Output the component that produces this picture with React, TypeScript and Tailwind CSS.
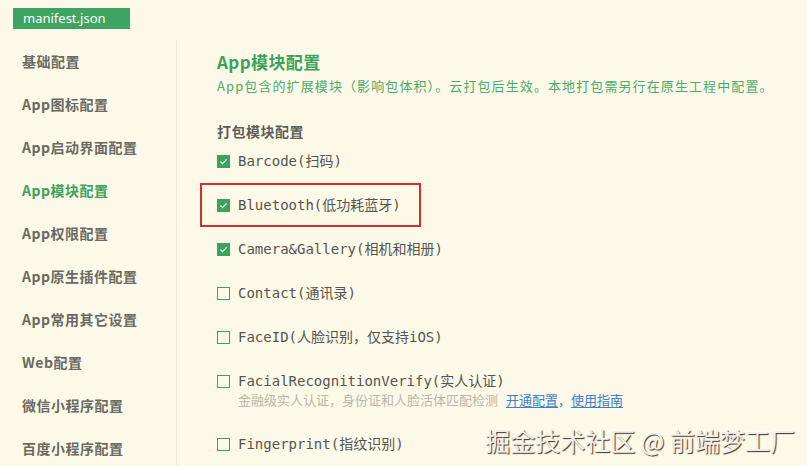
const sideItems = [
  "基础配置",
  "App图标配置",
  "App启动界面配置",
  "App模块配置",
  "App权限配置",
  "App原生插件配置",
  "App常用其它设置",
  "Web配置",
  "微信小程序配置",
  "百度小程序配置",
];

const modules = [
  { label: "Barcode(扫码)", checked: true },
  { label: "Bluetooth(低功耗蓝牙)", checked: true, boxed: true },
  { label: "Camera&Gallery(相机和相册)", checked: true },
  { label: "Contact(通讯录)", checked: false },
  { label: "FaceID(人脸识别，仅支持iOS)", checked: false },
  { label: "FacialRecognitionVerify(实人认证)", checked: false, desc: true },
  { label: "Fingerprint(指纹识别)", checked: false },
];

export default function App() {
  return (
    <main className="relative h-[466px] w-[807px] overflow-hidden bg-[#fdf9e8] font-['Noto_Sans_CJK_SC',sans-serif]">
      <div className="flex h-10 items-start pl-[13px] pt-2">
        <div className="flex h-[21px] w-[117px] items-center bg-[#3da461] pl-[10px] font-['Noto_Sans','Noto_Sans_CJK_SC',sans-serif] text-[13px] text-white">
          manifest.json
        </div>
      </div>

      <div className="flex">
        <aside className="w-[177px] shrink-0 border-r border-[#f1ecd8]">
          {sideItems.map((item) => (
            <div
              key={item}
              className={
                item === "App模块配置"
                  ? "flex h-[43px] items-center pl-[22px] text-[14px] font-bold tracking-[0.5px] text-[#3aa35c]"
                  : "flex h-[43px] items-center pl-[22px] text-[14px] font-bold tracking-[0.5px] text-[#6a6a62]"
              }
            >
              {item}
            </div>
          ))}
        </aside>

        <section className="flex-1 pl-[40px] pt-[10px]">
          <h1 className="text-[17px] font-bold leading-6 tracking-[0.4px] text-[#3aa35c]">App模块配置</h1>
          <p className="mt-[2px] text-[13px] leading-5 tracking-[1.1px] text-[#4aab6b]">
            App包含的扩展模块（影响包体积）。云打包后生效。本地打包需另行在原生工程中配置。
          </p>
          <h2 className="mt-[25px] text-[14px] font-bold leading-5 tracking-[0.5px] text-[#5e5e58]">打包模块配置</h2>

          <div className="-ml-[17px] mt-[-2px] flex flex-col">
            {modules.map((m) => (
              <div
                key={m.label}
                className={
                  m.boxed
                    ? "w-[221px] border-2 border-[#d62d2d] py-[10px] pl-[15px]"
                    : m.desc
                      ? "pb-[13px] pl-[17px] pt-3"
                      : "py-3 pl-[17px]"
                }
              >
                <div className="flex h-5 items-center gap-[8px]">
                  {m.checked ? (
                    <span className="flex h-[13px] w-[13px] items-center justify-center bg-[#3ca35e]">
                      <svg width="9" height="9" viewBox="0 0 9 9" fill="none">
                        <path d="M1.5 4.6 3.6 6.6 7.6 2.4" stroke="white" strokeWidth="1.3" />
                      </svg>
                    </span>
                  ) : (
                    <span className="h-[13px] w-[13px] border border-[#3ca35e]" />
                  )}
                  <span className="font-['DejaVu_Sans_Mono','Noto_Sans_CJK_SC',monospace] text-[14px] text-[#55554f]">
                    {m.label}
                  </span>
                </div>
                {m.desc ? (
                  <div className="flex h-[18px] items-center pl-[21px] text-[13px] text-[#b9b7aa]">
                    金融级实人认证，身份证和人脸活体匹配检测
                    <span className="ml-[8px] text-[#3b7fcf] underline underline-offset-2">开通配置</span>
                    <span className="text-[#3b7fcf]">，</span>
                    <span className="text-[#3b7fcf] underline underline-offset-2">使用指南</span>
                  </div>
                ) : null}
              </div>
            ))}
          </div>
        </section>
      </div>

      <div className="absolute bottom-[10px] right-[12px] text-[25px] leading-8 text-[#f2efe6] [text-shadow:1px_1px_1px_rgba(0,0,0,0.8),-1px_-1px_0_rgba(255,255,255,0.6)]">
        掘金技术社区 @ 前端梦工厂
      </div>
    </main>
  );
}
